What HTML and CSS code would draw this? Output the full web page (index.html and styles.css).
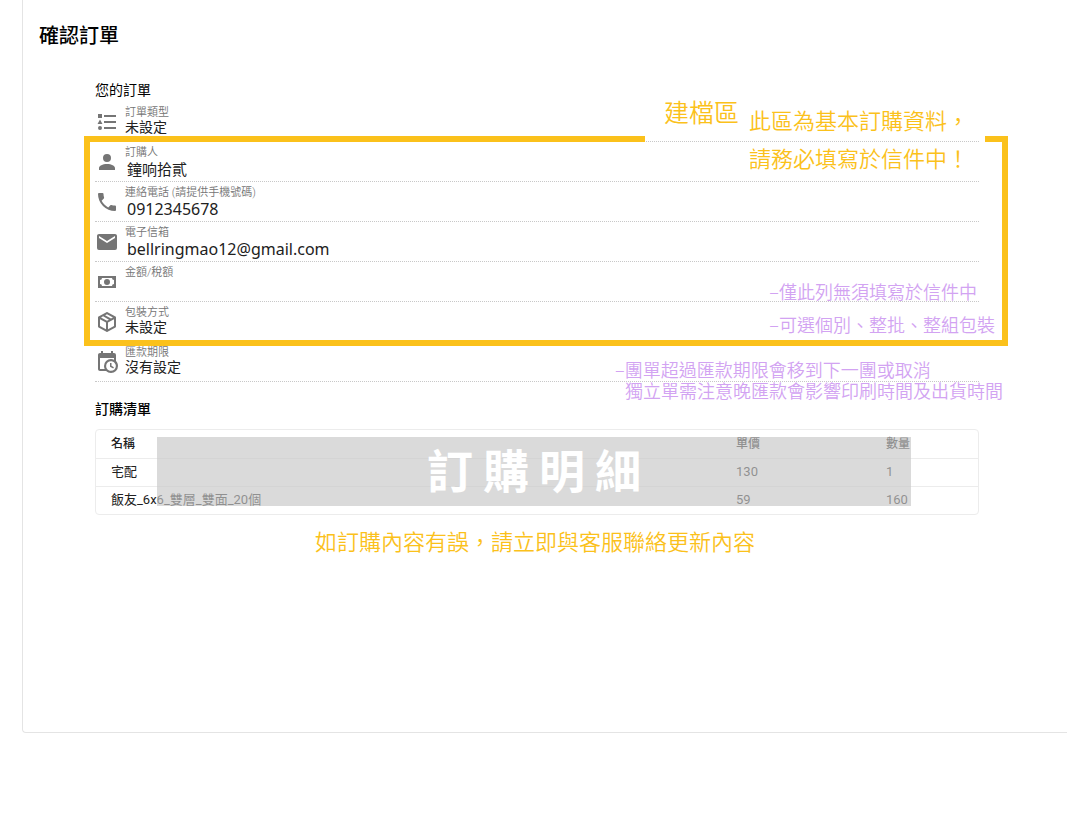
FILE: index.html
```
<!DOCTYPE html>
<html lang="zh-Hant">
<head>
  <meta charset="UTF-8">
  <meta name="viewport" content="width=device-width, initial-scale=1.0">
  <title>確認訂單</title>
  <link rel="stylesheet" href="styles.css">
</head>
<body>
  <main class="card">
    <h1>確認訂單</h1>

    <div class="order">
      <h2>您的訂單</h2>

      <div class="row">
        <svg class="icon" viewBox="0 0 24 24"><path d="M5,9.5L7.5,14H2.5L5,9.5M3,4H7V8H3V4M5,20A2,2 0 0,0 7,18A2,2 0 0,0 5,16A2,2 0 0,0 3,18A2,2 0 0,0 5,20M9,5V7H21V5H9M9,19H21V17H9V19M9,13H21V11H9V13Z"/></svg>
        <div class="field">
          <div class="label">訂單類型</div>
          <div class="value">未設定</div>
        </div>
      </div>

      <div class="group">
        <div class="row">
          <svg class="icon" viewBox="0 0 24 24"><path d="M12,4A4,4 0 0,1 16,8A4,4 0 0,1 12,12A4,4 0 0,1 8,8A4,4 0 0,1 12,4M12,14C16.42,14 20,15.79 20,18V20H4V18C4,15.79 7.58,14 12,14Z"/></svg>
          <div class="field">
            <div class="label">訂購人</div>
            <div class="value filled name">鐘响拾貳</div>
          </div>
        </div>
        <div class="row">
          <svg class="icon" viewBox="0 0 24 24"><path d="M6.62,10.79C8.06,13.62 10.38,15.94 13.21,17.38L15.41,15.18C15.69,14.9 16.08,14.82 16.43,14.93C17.55,15.3 18.75,15.5 20,15.5A1,1 0 0,1 21,16.5V20A1,1 0 0,1 20,21A17,17 0 0,1 3,4A1,1 0 0,1 4,3H7.5A1,1 0 0,1 8.5,4C8.5,5.25 8.7,6.45 9.07,7.57C9.18,7.92 9.1,8.31 8.82,8.59L6.62,10.79Z"/></svg>
          <div class="field">
            <div class="label">連絡電話 (請提供手機號碼)</div>
            <div class="value filled">0912345678</div>
          </div>
        </div>
        <div class="row">
          <svg class="icon" viewBox="0 0 24 24"><path d="M20,8L12,13L4,8V6L12,11L20,6M20,4H4C2.89,4 2,4.89 2,6V18A2,2 0 0,0 4,20H20A2,2 0 0,0 22,18V6C22,4.89 21.1,4 20,4Z"/></svg>
          <div class="field">
            <div class="label">電子信箱</div>
            <div class="value filled">bellringmao12@gmail.com</div>
          </div>
        </div>
        <div class="row">
          <svg class="icon" viewBox="0 0 24 24"><path d="M3,6H21V18H3V6M12,9A3,3 0 0,1 15,12A3,3 0 0,1 12,15A3,3 0 0,1 9,12A3,3 0 0,1 12,9M7,8A2,2 0 0,1 5,10V14A2,2 0 0,1 7,16H17A2,2 0 0,1 19,14V10A2,2 0 0,1 17,8H7Z"/></svg>
          <div class="field">
            <div class="label">金額/稅額</div>
          </div>
          <div class="note note-amount">–僅此列無須填寫於信件中</div>
        </div>
        <div class="row">
          <svg class="icon" viewBox="0 0 24 24"><path d="M21,16.5C21,16.88 20.79,17.21 20.47,17.38L12.57,21.82C12.41,21.94 12.21,22 12,22C11.79,22 11.59,21.94 11.43,21.82L3.53,17.38C3.21,17.21 3,16.88 3,16.5V7.5C3,7.12 3.21,6.79 3.53,6.62L11.43,2.18C11.59,2.06 11.79,2 12,2C12.21,2 12.41,2.06 12.57,2.18L20.47,6.62C20.79,6.79 21,7.12 21,7.5V16.5M12,4.15L10.11,5.22L16,8.61L17.96,7.5L12,4.15M6.04,7.5L12,10.85L13.96,9.75L8.08,6.35L6.04,7.5M5,15.91L11,19.29V12.58L5,9.21V15.91M19,15.91V9.21L13,12.58V19.29L19,15.91Z"/></svg>
          <div class="field">
            <div class="label">包裝方式</div>
            <div class="value">未設定</div>
          </div>
          <div class="note note-pack">–可選個別、整批、整組包裝</div>
        </div>
        <div class="frame"></div>
        <div class="callout callout-title">建檔區</div>
        <div class="callout callout-text">此區為基本訂購資料，<br>請務必填寫於信件中！</div>
      </div>

      <div class="row">
        <svg class="icon" viewBox="0 0 24 24"><path d="M15,13H16.5V15.82L18.94,17.23L18.19,18.53L15,16.69V13M19,8H5V19H9.67C9.24,18.09 9,17.07 9,16A7,7 0 0,1 16,9C17.07,9 18.09,9.24 19,9.67V8M5,21C3.89,21 3,20.1 3,19V5C3,3.89 3.89,3 5,3H6V1H8V3H16V1H18V3H19A2,2 0 0,1 21,5V11.1C22.24,12.36 23,14.09 23,16A7,7 0 0,1 16,23C14.09,23 12.36,22.24 11.1,21H5M16,11.15A4.85,4.85 0 0,0 11.15,16C11.15,18.68 13.32,20.85 16,20.85A4.85,4.85 0 0,0 20.85,16C20.85,13.32 18.68,11.15 16,11.15Z"/></svg>
        <div class="field">
          <div class="label">匯款期限</div>
          <div class="value">沒有設定</div>
        </div>
        <div class="note note-deadline">–團單超過匯款期限會移到下一團或取消<br><span class="indent">獨立單需注意晚匯款會影響印刷時間及出貨時間</span></div>
      </div>

      <h2 class="list-title">訂購清單</h2>
      <div class="items">
        <table>
          <thead>
            <tr><th>名稱</th><th class="price">單價</th><th class="qty">數量</th></tr>
          </thead>
          <tbody>
            <tr><td>宅配</td><td>130</td><td>1</td></tr>
            <tr><td>飯友_6x6_雙層_雙面_20個</td><td>59</td><td>160</td></tr>
          </tbody>
        </table>
        <div class="cover">訂購明細</div>
      </div>

      <p class="reminder">如訂購內容有誤，請立即與客服聯絡更新內容</p>
    </div>
  </main>
</body>
</html>
```
FILE: styles.css
```
* {
  box-sizing: border-box;
}
body {
  margin: 0;
  font-family: Roboto, "Noto Sans CJK TC", sans-serif;
  color: #212121;
  background: #fff;
}
.card {
  margin-left: 22px;
  padding: 22px 0 175px 16px;
  border: 1px solid #e4e4e4;
  border-width: 0 0 1px 1px;
  border-bottom-left-radius: 4px;
}
h1 {
  margin: 0 0 28px;
  font-size: 20px;
  line-height: 28px;
  font-weight: 500;
  color: #000;
}
h2 {
  margin: 0;
  font-size: 14px;
  line-height: 24px;
  font-weight: 400;
  color: #000;
}
.order {
  margin: 0 88px 0 56px;
}

/* order fields */
.row {
  position: relative;
  display: flex;
  align-items: center;
  gap: 6px;
  height: 40px;
  border-bottom: 1px dotted #c8c8c8;
}
.icon {
  flex: none;
  width: 24px;
  height: 24px;
  fill: #757575;
}
.field {
  align-self: flex-start;
  padding-top: 4px;
}
.label {
  font-size: 11px;
  line-height: 13px;
  font-weight: 350;
  color: #757575;
}
.value {
  font-size: 14px;
  line-height: 16px;
}
.value.filled {
  padding-left: 2px;
  font-family: "Noto Sans", "Noto Sans CJK TC", sans-serif;
  font-size: 16px;
  line-height: 20px;
}
.value.name {
  font-size: 15px;
}

/* highlighted area */
.group {
  position: relative;
}
.frame {
  position: absolute;
  inset: -6px -29px -4px -11px;
  border: 6px solid #fbc11b;
  border-top: 0;
}
.frame::before,
.frame::after {
  content: "";
  position: absolute;
  top: 0;
  height: 6px;
  background: #fbc11b;
}
.frame::before {
  left: 0;
  right: 357px;
}
.frame::after {
  right: 0;
  width: 17px;
}
.callout {
  position: absolute;
  font-family: "Noto Sans CJK TC", sans-serif;
  font-weight: 350;
  color: #fbc11b;
  white-space: nowrap;
}
.callout-title {
  right: 240px;
  top: -49px;
  font-size: 25px;
  line-height: 36px;
}
.callout-text {
  right: 10px;
  top: -42px;
  font-size: 22px;
  line-height: 38px;
}
.note {
  position: absolute;
  font-family: "Noto Sans CJK TC", sans-serif;
  font-size: 18px;
  line-height: 21px;
  font-weight: 350;
  color: #d2a3f2;
  white-space: nowrap;
}
.note-amount {
  right: 2px;
  top: 19px;
}
.note-pack {
  right: -16px;
  top: 12px;
}
.note-deadline {
  right: -24px;
  top: 17px;
}
.indent {
  padding-left: 10px;
}

/* item table */
.list-title {
  margin: 15px 0 8px;
  font-weight: 500;
}
.items {
  position: relative;
  border: 1px solid #ececec;
  border-radius: 4px;
}
table {
  width: 100%;
  border-collapse: collapse;
  table-layout: fixed;
}
th,
td {
  height: 28px;
  padding: 0 0 0 15px;
  font-size: 13px;
  line-height: 20px;
  font-weight: 400;
  text-align: left;
}
th {
  font-size: 12px;
  font-weight: 500;
}
tbody td {
  border-top: 1px solid #ececec;
}
.price {
  width: 17%;
}
.qty {
  width: 107px;
}
.cover {
  position: absolute;
  inset: 7px 67px 8px 61px;
  display: flex;
  align-items: center;
  justify-content: center;
  background: rgba(200, 200, 200, 0.67);
  color: #fff;
  font-size: 46px;
  line-height: 68px;
  font-weight: 700;
  letter-spacing: 10px;
  text-indent: 10px;
}
.reminder {
  margin: 14px 0 0;
  padding-right: 4px;
  font-size: 22px;
  line-height: 28px;
  font-weight: 350;
  color: #fbc11b;
  text-align: center;
}
```
